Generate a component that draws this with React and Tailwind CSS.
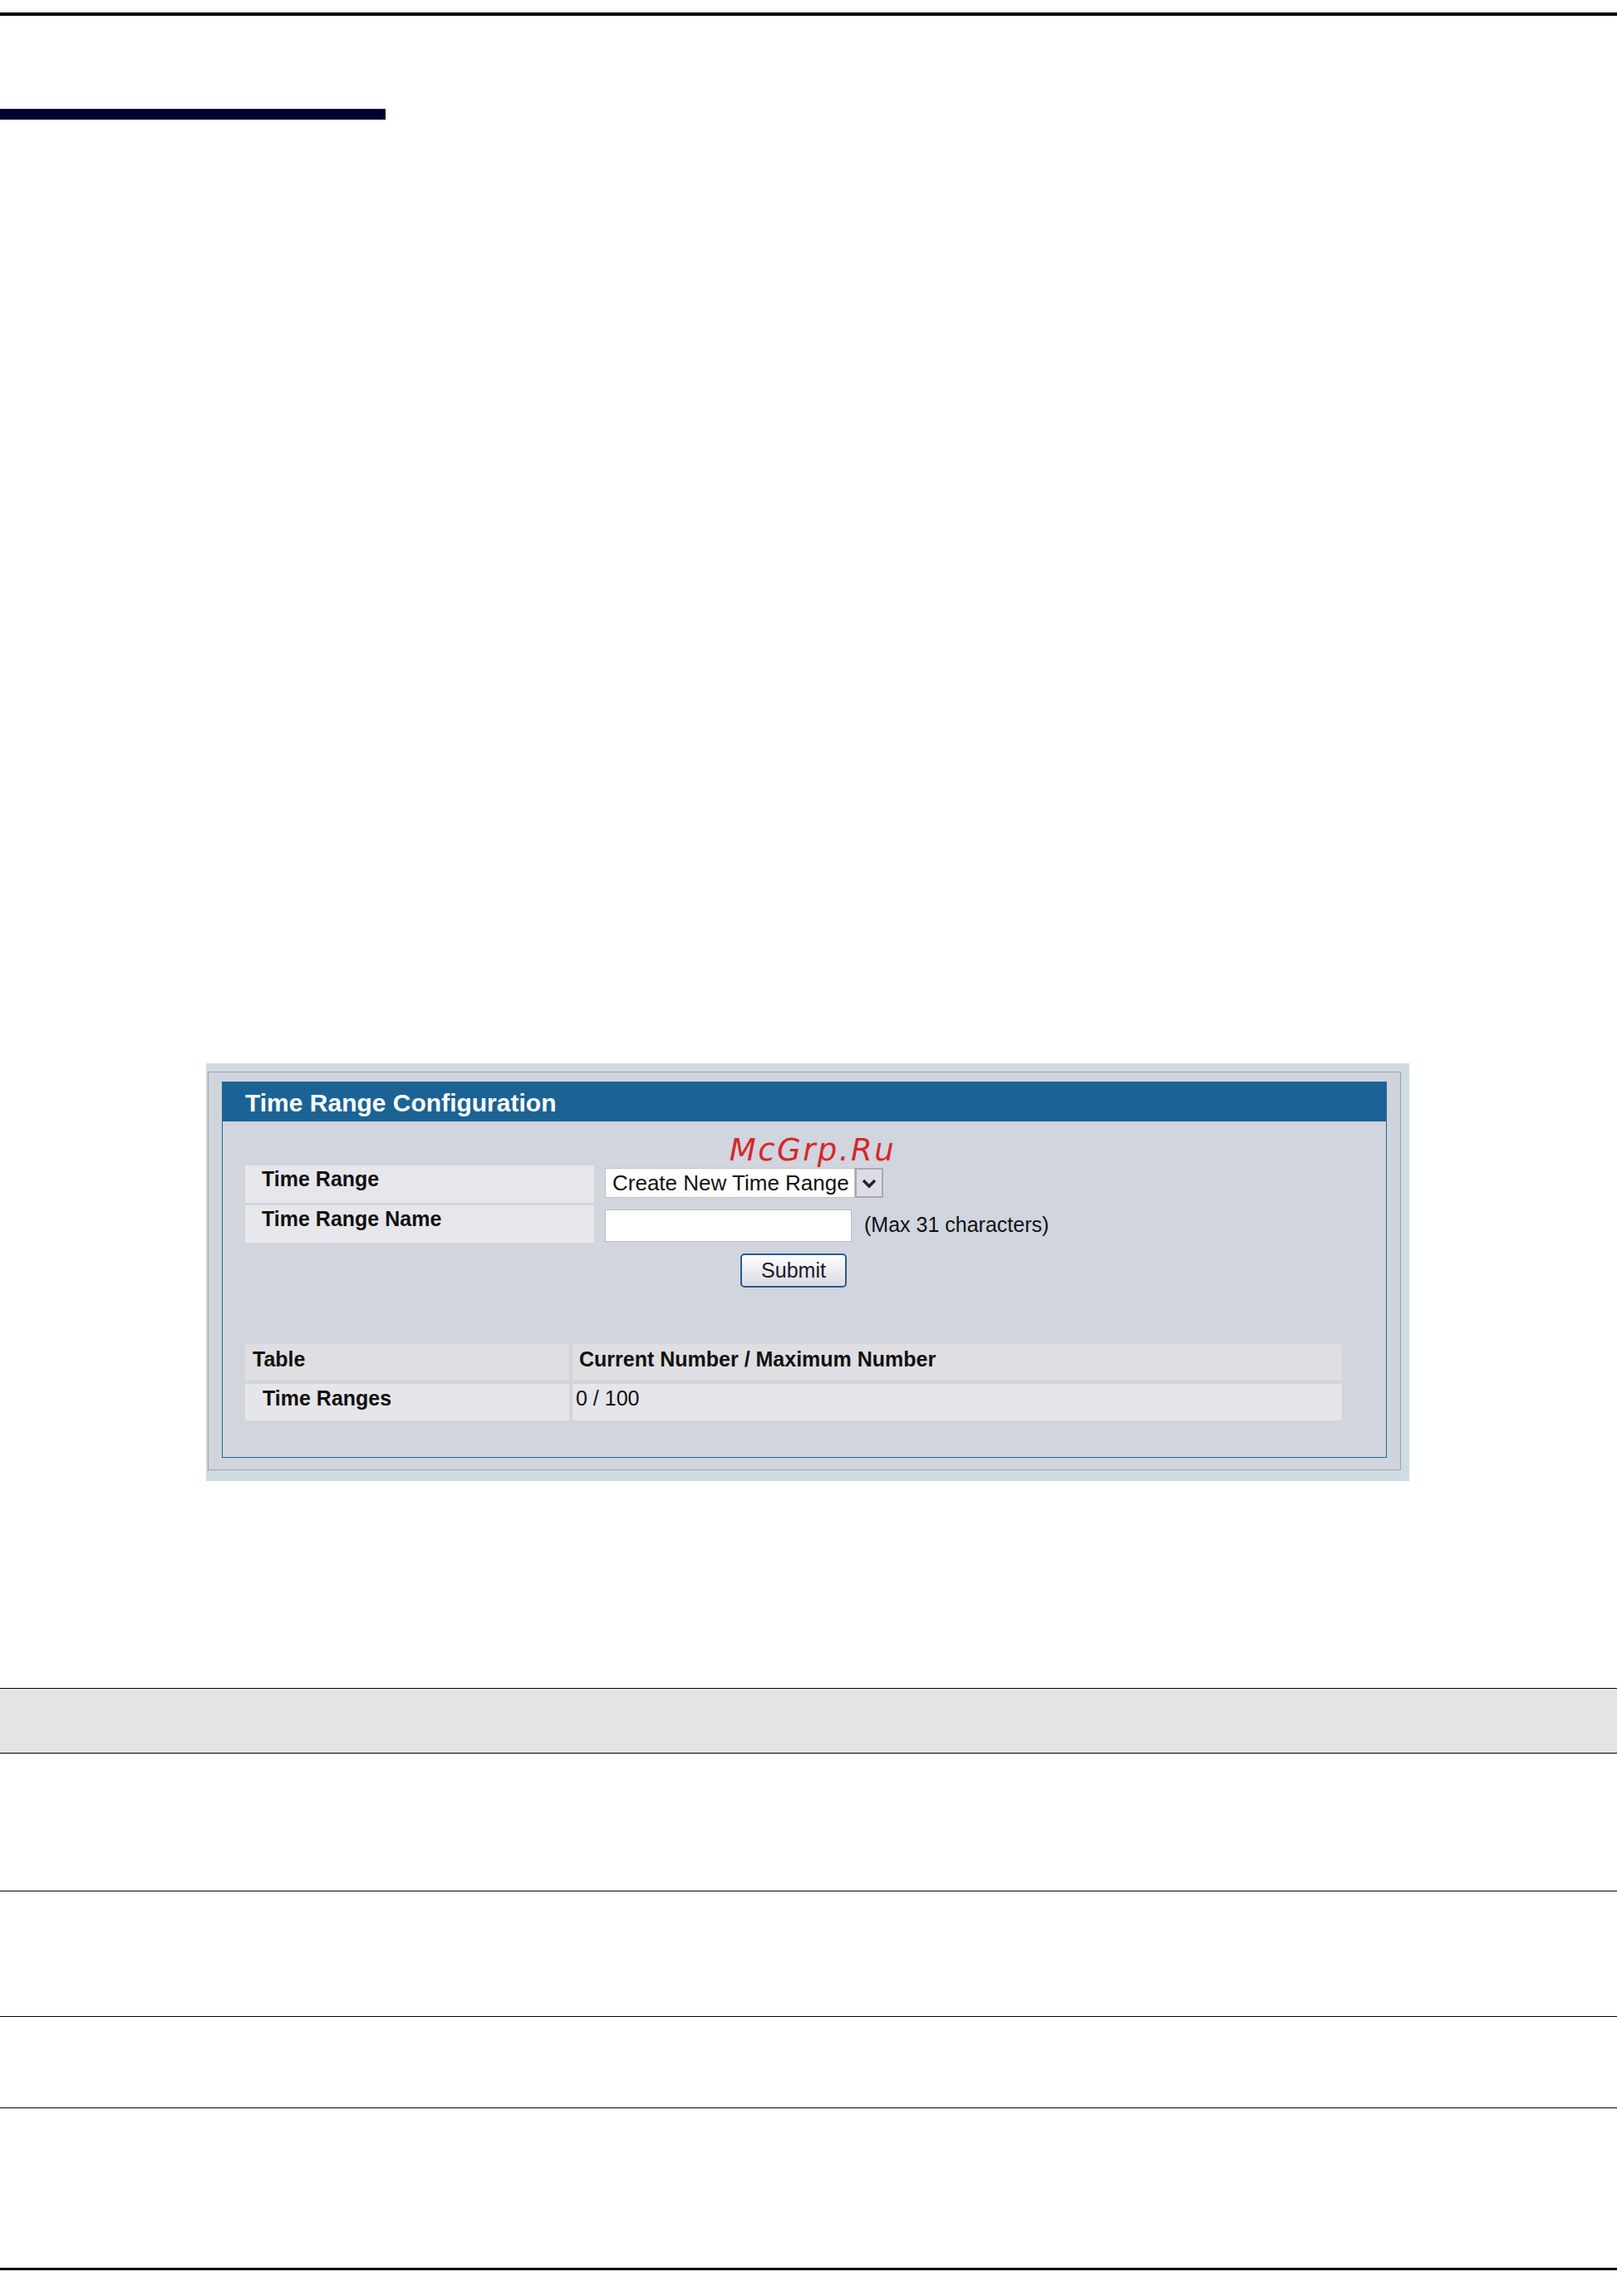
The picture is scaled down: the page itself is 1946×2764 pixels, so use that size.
import React from "react";

const font = { fontFamily: '"Liberation Sans", Arial, sans-serif' };

function Select() {
  return (
    <div className="flex h-[36px] w-[335px]">
      <div className="flex flex-1 items-center border border-[#c4c4c4] bg-white pl-[8px] text-[26px] text-[#111]">
        Create New Time Range
      </div>
      <div className="flex w-[34px] items-center justify-center border-2 border-[#a9a9ad] bg-[#dcdce8]">
        <svg width="18" height="13" viewBox="0 0 18 13">
          <path d="M2 3 L9 10 L16 3" fill="none" stroke="#222" strokeWidth="3.5" />
        </svg>
      </div>
    </div>
  );
}

function ConfigPanel() {
  return (
    <div className="ml-[248px] w-[1448px] bg-[#cedbe3] pb-[13px] pl-[2px] pr-[10px] pt-[10px]">
      <div className="border border-[#9ea2a6] bg-[#d0d5dd] pb-[14px] pl-[16px] pr-[16px] pt-[11px]">
        <div className="border border-[#246898] bg-[#d0d5de]">
          {/* Header */}
          <div className="flex h-[47px] items-center bg-[#1b6395] pl-[27px] pt-[2px] text-[30px] font-bold text-white">
            Time Range Configuration
          </div>

          <div className="pl-[27px] pr-[53px] pb-[44px]">
            <div
              className="h-[53px] pl-[46px] pt-[16px] text-center text-[37px] italic leading-none tracking-[2.5px] text-[#d8262a]"
              style={{ fontFamily: '"DejaVu Sans", sans-serif' }}
            >
              McGrp.Ru
            </div>

            {/* Form rows */}
            <div className="grid grid-cols-[420px_1fr] gap-x-[13px] gap-y-[3px]">
              <div className="h-[45px] bg-[#e7e7eb] pl-[20px] pt-[2px] text-[25px] font-bold leading-[28px] text-[#111]">
                Time Range
              </div>
              <div className="pt-[3px]">
                <Select />
              </div>
              <div className="h-[45px] bg-[#e7e7eb] pl-[20px] pt-[2px] text-[25px] font-bold leading-[28px] text-[#111]">
                Time Range Name
              </div>
              <div className="flex items-center pt-[3px]">
                <input
                  type="text"
                  className="h-[39px] w-[297px] border border-[#bcbcbc] bg-white outline-none"
                />
                <span className="ml-[15px] text-[25px] text-[#111]">(Max 31 characters)</span>
              </div>
            </div>

            <div className="mt-[13px] flex justify-center">
              <button className="h-[41px] w-[128px] rounded-[5px] border-2 border-[#2c5b8c] bg-gradient-to-b from-white to-[#d9d9e5] text-[25px] text-[#1a1a2a]">
                Submit
              </button>
            </div>

            {/* Summary table */}
            <div className="mt-[68px] grid grid-cols-[390px_1fr] gap-x-[4px] gap-y-[4px]">
              <div className="h-[44px] bg-[#dfdee2] pl-[9px] pt-[4px] text-[25px] font-bold leading-[28px] text-[#111]">
                Table
              </div>
              <div className="h-[44px] bg-[#dfdee2] pl-[8px] pt-[4px] text-[25px] font-bold leading-[28px] text-[#111]">
                Current Number / Maximum Number
              </div>
              <div className="h-[44px] bg-[#e6e5ea] pl-[21px] pt-[3px] text-[25px] font-bold leading-[28px] text-[#111]">
                Time Ranges
              </div>
              <div className="h-[44px] bg-[#e6e5ea] pl-[4px] pt-[3px] text-[25px] leading-[28px] text-[#111]">
                0 / 100
              </div>
            </div>
          </div>
        </div>
      </div>
    </div>
  );
}

export default function App() {
  return (
    <div className="min-h-[2764px] w-[1946px] bg-white pt-[15px]" style={font}>
      <div className="h-[4px] bg-black" />
      <div className="mt-[112px] h-[13px] w-[464px] bg-[#000033]" />

      <div className="mt-[1136px]">
        <ConfigPanel />
      </div>

      {/* Description table (empty rows) */}
      <div className="mt-[249px]">
        <div className="h-[79px] border-y border-black bg-[#e4e4e4]" />
        <div className="h-[166px] border-b border-black" />
        <div className="h-[151px] border-b border-black" />
        <div className="h-[110px] border-b border-black" />
      </div>

      <div className="mt-[192px] h-[3px] bg-black" />
    </div>
  );
}
